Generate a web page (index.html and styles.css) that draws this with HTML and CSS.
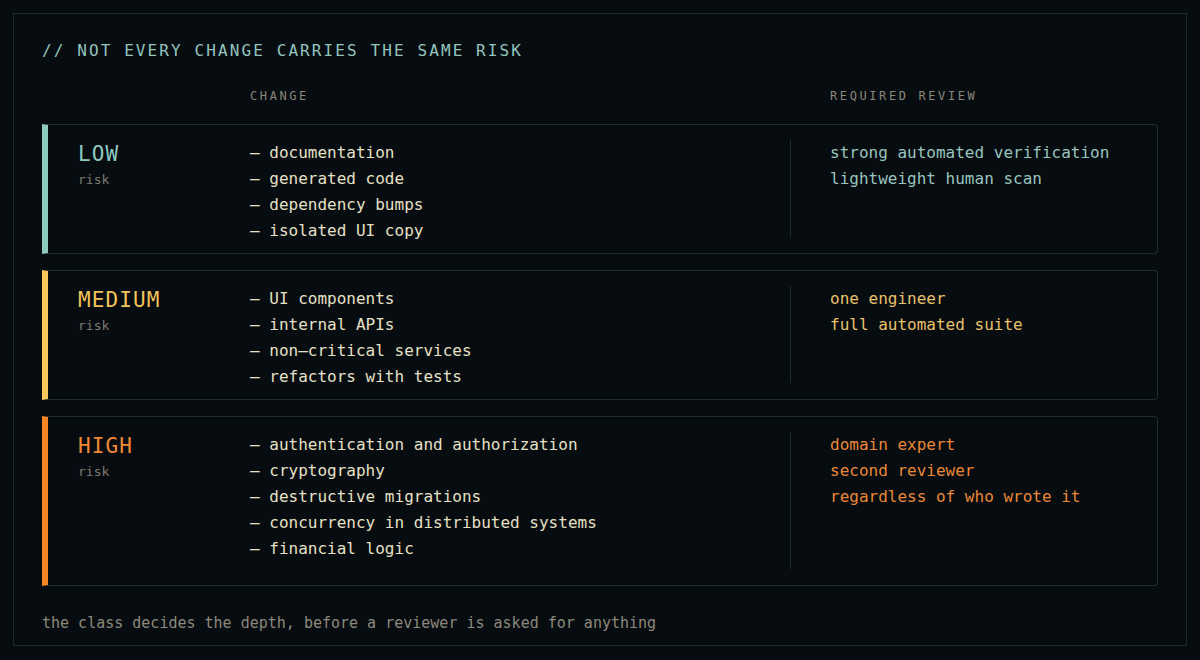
FILE: index.html
```
<!DOCTYPE html>
<html>
<head>
    <meta name="viewport" content="width=device-width, initial-scale=1">
    <title>Risk classes</title>
    <link rel="stylesheet" href="styles.css">
</head>
<body>
    <div class="frame">
        <h1 class="title">// NOT EVERY CHANGE CARRIES THE SAME RISK</h1>

        <div class="head-row">
            <span></span>
            <span class="col-head">CHANGE</span>
            <span class="col-head review-head">REQUIRED REVIEW</span>
        </div>

        <div class="risk-card low">
            <div class="label">
                <div class="level">LOW</div>
                <div class="risk">risk</div>
            </div>
            <ul class="changes">
                <li>– documentation</li>
                <li>– generated code</li>
                <li>– dependency bumps</li>
                <li>– isolated UI copy</li>
            </ul>
            <div class="review">
                <ul>
                    <li>strong automated verification</li>
                    <li>lightweight human scan</li>
                </ul>
            </div>
        </div>

        <div class="risk-card medium">
            <div class="label">
                <div class="level">MEDIUM</div>
                <div class="risk">risk</div>
            </div>
            <ul class="changes">
                <li>– UI components</li>
                <li>– internal APIs</li>
                <li>– non–critical services</li>
                <li>– refactors with tests</li>
            </ul>
            <div class="review">
                <ul>
                    <li>one engineer</li>
                    <li>full automated suite</li>
                </ul>
            </div>
        </div>

        <div class="risk-card high">
            <div class="label">
                <div class="level">HIGH</div>
                <div class="risk">risk</div>
            </div>
            <ul class="changes">
                <li>– authentication and authorization</li>
                <li>– cryptography</li>
                <li>– destructive migrations</li>
                <li>– concurrency in distributed systems</li>
                <li>– financial logic</li>
            </ul>
            <div class="review">
                <ul>
                    <li>domain expert</li>
                    <li>second reviewer</li>
                    <li>regardless of who wrote it</li>
                </ul>
            </div>
        </div>

        <p class="footnote">the class decides the depth, before a reviewer is asked for anything</p>
    </div>
</body>
</html>
```

FILE: styles.css
```
body {
    margin: 0;
    padding: 13px;
    background-color: #070c10;
    font-family: "DejaVu Sans Mono", "Liberation Mono", monospace;
    color: #e6e0c6;
}
.frame {
    border: 1px solid #1c2a2a;
    padding: 27px 28px 12px;
    height: 633px;
    box-sizing: border-box;
}
.title {
    margin: 0;
    font-size: 16px;
    font-weight: normal;
    line-height: 20px;
    letter-spacing: 2.1px;
    color: #93c4be;
}
.head-row {
    display: grid;
    grid-template-columns: 172px 540px 1fr;
    padding-left: 36px;
    margin: 27px 0 20px;
    line-height: 16px;
}
.col-head {
    font-size: 12px;
    letter-spacing: 2.6px;
    color: #8a877b;
}
.review-head {
    padding-left: 40px;
}
.risk-card {
    display: grid;
    grid-template-columns: 172px 540px 1fr;
    border: 1px solid #1e2d2d;
    border-left: 6px solid;
    border-radius: 0 4px 4px 0;
    padding: 15px 0 9px 30px;
    margin-bottom: 16px;
}
.low { border-left-color: #8ecac2; }
.medium { border-left-color: #f6c85a; }
.high { border-left-color: #f98424; }
.high .changes {
    padding-bottom: 14px;
}
.level {
    font-size: 21px;
    line-height: 28px;
    letter-spacing: 1.1px;
}
.risk {
    font-size: 13px;
    line-height: 23px;
    color: #7d7a70;
}
.low .level { color: #8ecac2; }
.medium .level { color: #f2c35a; }
.high .level { color: #f08a35; }
ul {
    list-style: none;
    margin: 0;
    padding: 0;
    font-size: 16px;
    line-height: 26px;
}
.review {
    border-left: 1px solid #1e2d2d;
    margin-bottom: 7px;
    padding-left: 39px;
}
.low .review { color: #97c4be; }
.medium .review { color: #e8c16a; }
.high .review { color: #ea8838; }
.footnote {
    margin: 27px 0 0;
    font-size: 15px;
    line-height: 20px;
    color: #8d897c;
}
```
